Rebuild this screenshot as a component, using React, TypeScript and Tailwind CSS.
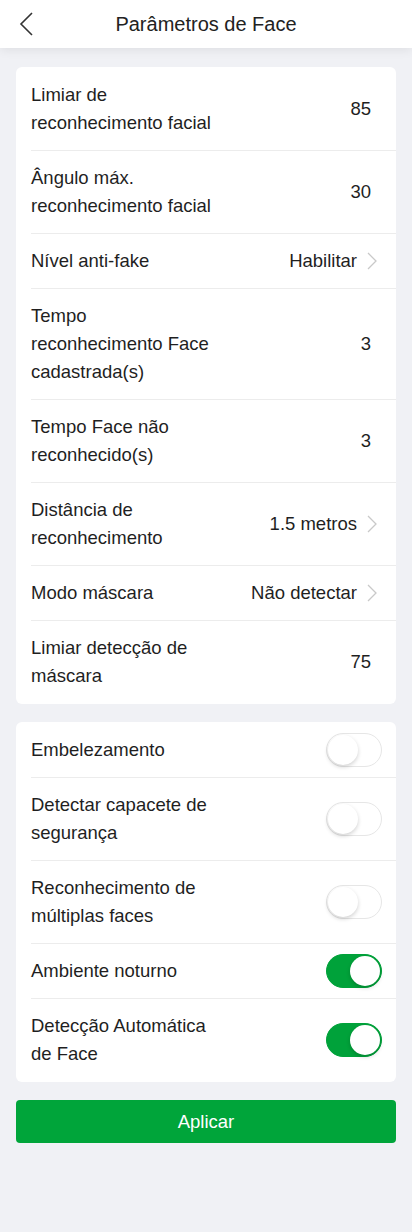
import React, { useState } from 'react';

type Row = { label: string; value: string; arrow?: boolean };

const params: Row[] = [
  { label: 'Limiar de reconhecimento facial', value: '85' },
  { label: 'Ângulo máx. reconhecimento facial', value: '30' },
  { label: 'Nível anti-fake', value: 'Habilitar', arrow: true },
  { label: 'Tempo reconhecimento Face cadastrada(s)', value: '3' },
  { label: 'Tempo Face não reconhecido(s)', value: '3' },
  { label: 'Distância de reconhecimento', value: '1.5 metros', arrow: true },
  { label: 'Modo máscara', value: 'Não detectar', arrow: true },
  { label: 'Limiar detecção de máscara', value: '75' },
];

const initialSwitches = [
  { label: 'Embelezamento', on: false },
  { label: 'Detectar capacete de segurança', on: false },
  { label: 'Reconhecimento de múltiplas faces', on: false },
  { label: 'Ambiente noturno', on: true },
  { label: 'Detecção Automática de Face', on: true },
];

function Chevron() {
  return (
    <svg width="10" height="18" viewBox="0 0 10 18" fill="none" className="ml-[10px] shrink-0">
      <path d="M1 1l8 8-8 8" stroke="#c9c9c9" strokeWidth="1.3" />
    </svg>
  );
}

function Toggle({ on, onClick }: { on: boolean; onClick: () => void }) {
  return (
    <button
      onClick={onClick}
      className={`relative -my-[3px] h-[34px] w-[56px] shrink-0 rounded-full border ${on ? 'border-[#00a23a] bg-[#00a23a]' : 'border-[#e6e6e6] bg-white'}`}
    >
      <span
        className={`absolute top-[1px] h-[30px] w-[30px] rounded-full bg-white shadow-[0_2px_4px_rgba(0,0,0,0.18)] ${on ? 'right-[1px]' : 'left-[1px]'}`}
      />
    </button>
  );
}

export default function App() {
  const [switches, setSwitches] = useState(initialSwitches);

  return (
    <div className="min-h-[1232px] bg-[#f0f1f5] text-[#1f1f1f]" style={{ fontFamily: '"Liberation Sans", Arial, sans-serif' }}>
      <header className="relative flex h-[48px] items-center justify-center bg-white shadow-[0_2px_10px_rgba(0,0,0,0.08)]">
        <svg width="16" height="24" viewBox="0 0 16 24" fill="none" className="absolute left-[19px] top-[12px]">
          <path d="M13 1L2 12l11 11" stroke="#333" strokeWidth="1.6" />
        </svg>
        <h1 className="text-[20px] text-[#222]">Parâmetros de Face</h1>
      </header>

      <main className="flex flex-col gap-[18px] px-4 pt-[19px]">
        <section className="rounded-[6px] bg-white py-[1px] pl-[15px]">
          {params.map((r, i) => (
            <div
              key={r.label}
              className={`flex items-center justify-between py-[13px] pr-[19px] text-[18.5px] leading-[28px] ${i < params.length - 1 ? 'border-b border-[#ececec]' : ''}`}
            >
              <span className="max-w-[187px]">{r.label}</span>
              <span className="flex items-center">
                <span className={r.arrow ? '' : 'mr-[6px]'}>{r.value}</span>
                {r.arrow && <Chevron />}
              </span>
            </div>
          ))}
        </section>

        <section className="rounded-[6px] bg-white py-[1px] pl-[15px]">
          {switches.map((s, i) => (
            <div
              key={s.label}
              className={`flex items-center justify-between py-[13px] pr-[14px] text-[18.5px] leading-[28px] ${i < switches.length - 1 ? 'border-b border-[#ececec]' : ''}`}
            >
              <span className="max-w-[187px]">{s.label}</span>
              <Toggle
                on={s.on}
                onClick={() => setSwitches(switches.map((x, j) => (j === i ? { ...x, on: !x.on } : x)))}
              />
            </div>
          ))}
        </section>

        <button className="h-[43px] rounded-[4px] bg-[#00a53a] text-[18.5px] text-white">Aplicar</button>
      </main>
    </div>
  );
}
